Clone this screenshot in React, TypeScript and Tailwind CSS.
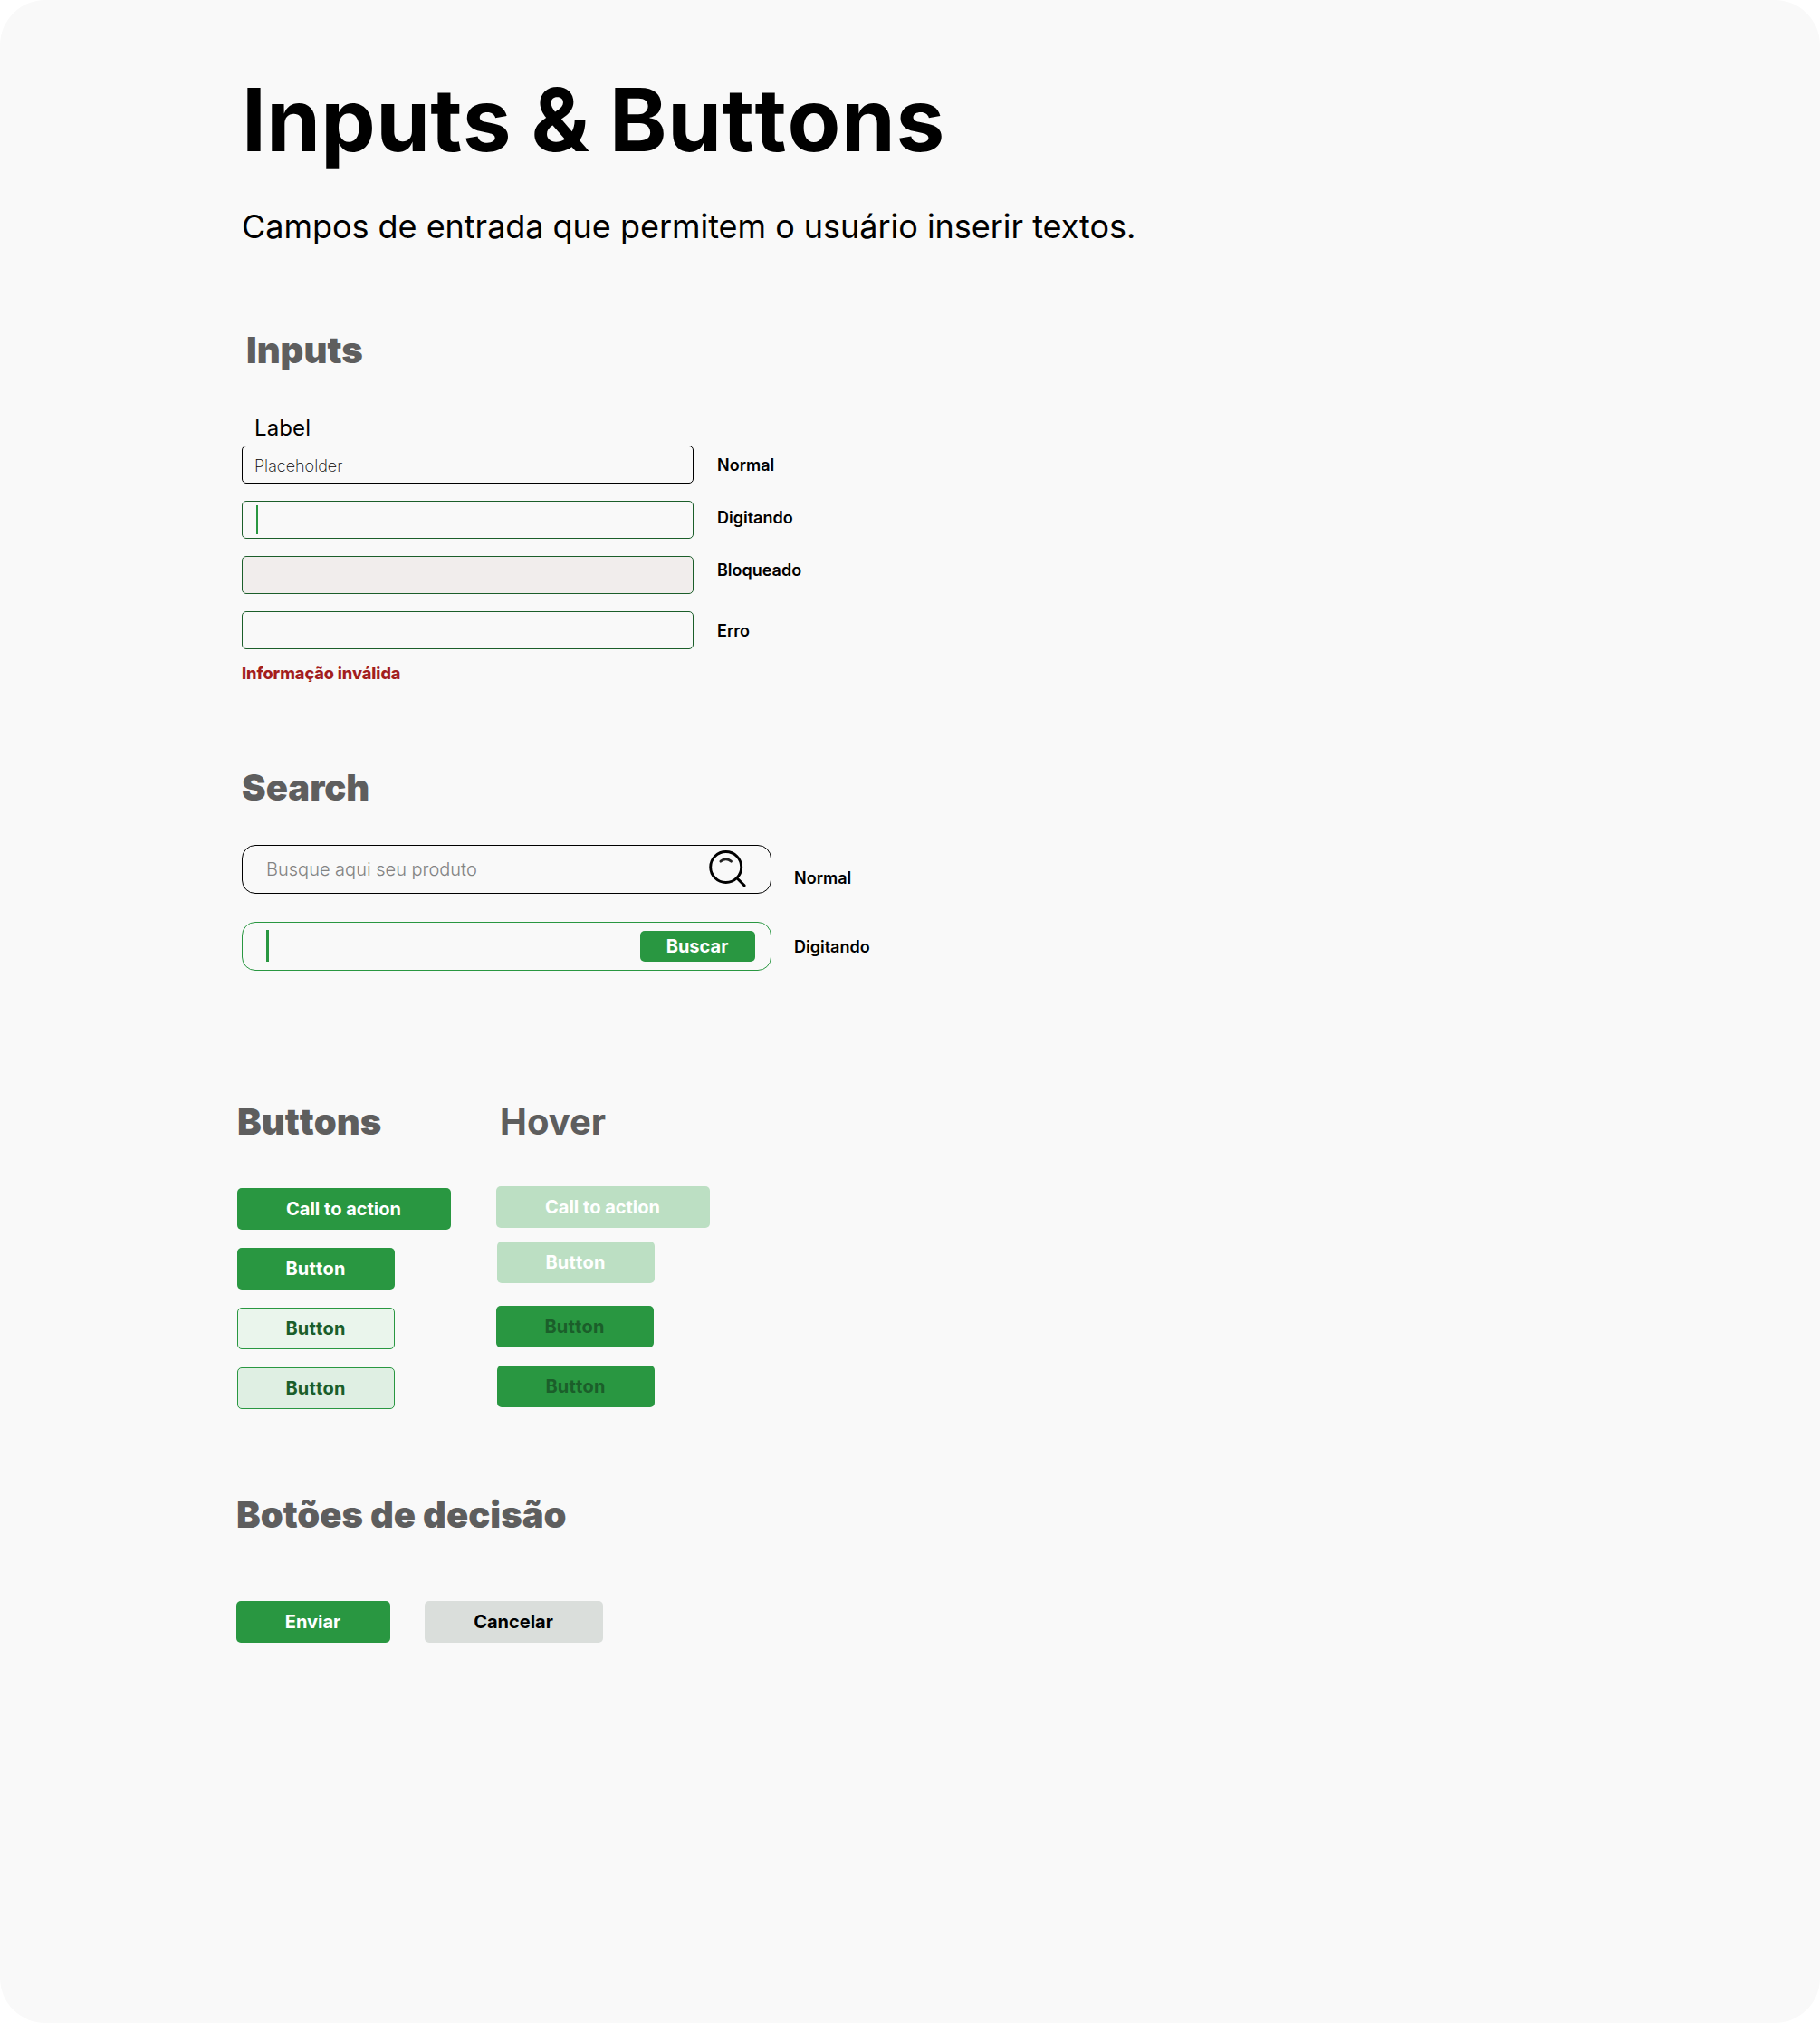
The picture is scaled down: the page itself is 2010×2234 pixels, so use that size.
import type { ReactNode } from "react";

function SectionTitle({ children, className = "" }: { children: ReactNode; className?: string }) {
  return (
    <h2 className={`-mb-[2px] text-[40px] leading-[50px] whitespace-nowrap text-[#5e5e5e] ${className}`}>
      {children}
    </h2>
  );
}

function Field({ children, className }: { children?: ReactNode; className: string }) {
  return (
    <div className={`flex h-[42px] w-[499px] items-center rounded-[5px] border ${className}`}>
      {children}
    </div>
  );
}

function StateName({ children, className = "" }: { children: ReactNode; className?: string }) {
  return (
    <span className={`text-lg leading-[22px] font-semibold whitespace-nowrap ${className}`}>
      {children}
    </span>
  );
}

function Button({ children, className }: { children: ReactNode; className: string }) {
  return (
    <button
      type="button"
      className={`flex h-[46px] items-center justify-center rounded-[5px] pr-px text-xl leading-6 font-bold whitespace-nowrap ${className}`}
    >
      {children}
    </button>
  );
}

function SearchIcon() {
  return (
    <svg
      className="h-[44px] w-[44px]"
      viewBox="0 0 44 44"
      fill="none"
      stroke="#000"
      strokeWidth="2.9"
      strokeLinecap="round"
    >
      <circle cx="21.7" cy="19.5" r="17" />
      <path d="M33.9 31.7 L42.1 39.9" />
      <path d="M15.9 13.1 Q21.7 8.6 27.5 13.1" stroke="#222" />
    </svg>
  );
}

export default function App() {
  return (
    <div className="h-[2234px] w-[2010px] bg-white">
      <main className="flex h-full w-full flex-col items-start rounded-[50px] bg-[#f9f9f9] pt-[74px] pl-[267px] font-['Inter',sans-serif] text-black">
        <h1 className="text-[96px] leading-[116px] font-bold tracking-[0.3px] whitespace-nowrap [font-kerning:none] [word-spacing:-1.3px]">
          Inputs &amp; <span className="tracking-[0.7px]">Buttons</span>
        </h1>
        <p className="mt-[38px] text-[36px] leading-[44px] tracking-[-0.03px] whitespace-nowrap">
          Campos de entrada que permitem o usuário inserir textos.
        </p>

        <section className="mt-[90px]">
          <SectionTitle className="ml-[5px] font-black">Inputs</SectionTitle>
          <div className="mt-[48px] flex items-start gap-[26px]">
            <div className="flex flex-col">
              <label className="mt-px ml-[14px] text-2xl leading-7 tracking-[0.1px]">Label</label>
              <Field className="mt-[5px] border-black pl-[13px]">
                <span className="mt-[3px] text-lg leading-[22px] font-extralight">Placeholder</span>
              </Field>
              <Field className="mt-[19px] border-[#1b5e2a] pl-[15px]">
                <span className="h-8 w-[2px] bg-[#299741]" />
              </Field>
              <Field className="mt-[19px] border-[#1b5e2a] bg-[#f1edec]" />
              <Field className="mt-[19px] border-[#1b5e2a]" />
              <span className="mt-[16px] text-lg leading-[22px] font-extrabold tracking-[-0.04px] text-[#a31e1e]">
                Informação inválida
              </span>
            </div>
            <div className="flex flex-col pt-[45px]">
              <StateName>Normal</StateName>
              <StateName className="mt-[36px]">Digitando</StateName>
              <StateName className="mt-[36px]">Bloqueado</StateName>
              <StateName className="mt-[45px]">Erro</StateName>
            </div>
          </div>
        </section>

        <section className="mt-[90px]">
          <SectionTitle className="font-black">Search</SectionTitle>
          <div className="mt-[40px] flex items-start gap-[25px]">
            <div className="flex w-[585px] flex-col gap-[31px]">
              <div className="flex h-[54px] items-center justify-between rounded-[15px] border border-black pr-[27px] pl-[26px]">
                <span className="text-xl leading-6 font-light text-[#838383]">Busque aqui seu produto</span>
                <SearchIcon />
              </div>
              <div className="flex h-[54px] items-center justify-between rounded-[15px] border border-[#299741] pr-[17px] pl-[26px]">
                <span className="-mt-px h-[35px] w-[3px] bg-[#299741]" />
                <button
                  type="button"
                  className="h-[34px] w-[127px] rounded-[5px] bg-[#299741] pr-px text-xl leading-6 font-bold text-white"
                >
                  Buscar
                </button>
              </div>
            </div>
            <div className="flex flex-col pt-[26px]">
              <StateName>Normal</StateName>
              <StateName className="mt-[54px]">Digitando</StateName>
            </div>
          </div>
        </section>

        <section className="mt-[142px] -ml-[5px] flex">
          <div className="flex w-[286px] flex-col items-start">
            <SectionTitle className="font-black [font-kerning:none]">Buttons</SectionTitle>
            <div className="mt-[50px] flex flex-col items-start gap-5">
              <Button className="w-[236px] bg-[#299741] text-white">Call to action</Button>
              <Button className="w-[174px] bg-[#299741] tracking-[0.2px] text-white [font-kerning:none]">Button</Button>
              <Button className="w-[174px] border border-[#299741] bg-[#eaf5ec] tracking-[0.2px] text-[#1b5e2a] [font-kerning:none]">Button</Button>
              <Button className="w-[174px] border border-[#299741] bg-[#dfefe3] tracking-[0.2px] text-[#1b5e2a] [font-kerning:none]">Button</Button>
            </div>
          </div>
          <div className="flex flex-col items-start">
            <SectionTitle className="ml-1 font-bold">Hover</SectionTitle>
            <Button className="mt-[48px] w-[236px] bg-[#bcdfc3] text-white">Call to action</Button>
            <Button className="mt-[15px] ml-px w-[174px] bg-[#bcdfc3] tracking-[0.2px] text-white [font-kerning:none]">Button</Button>
            <Button className="mt-[25px] w-[174px] bg-[#299741] tracking-[0.2px] text-[#1b5e2a] [font-kerning:none]">Button</Button>
            <Button className="mt-5 ml-px w-[174px] bg-[#299741] tracking-[0.2px] text-[#1b5e2a] [font-kerning:none]">Button</Button>
          </div>
        </section>

        <section className="mt-[92px] -ml-1.5">
          <SectionTitle className="font-black">Botões de decisão</SectionTitle>
          <div className="mt-[72px] flex gap-[38px]">
            <Button className="w-[170px] bg-[#299741] text-white">Enviar</Button>
            <Button className="w-[197px] bg-[#dadedb] text-black">Cancelar</Button>
          </div>
        </section>
      </main>
    </div>
  );
}
